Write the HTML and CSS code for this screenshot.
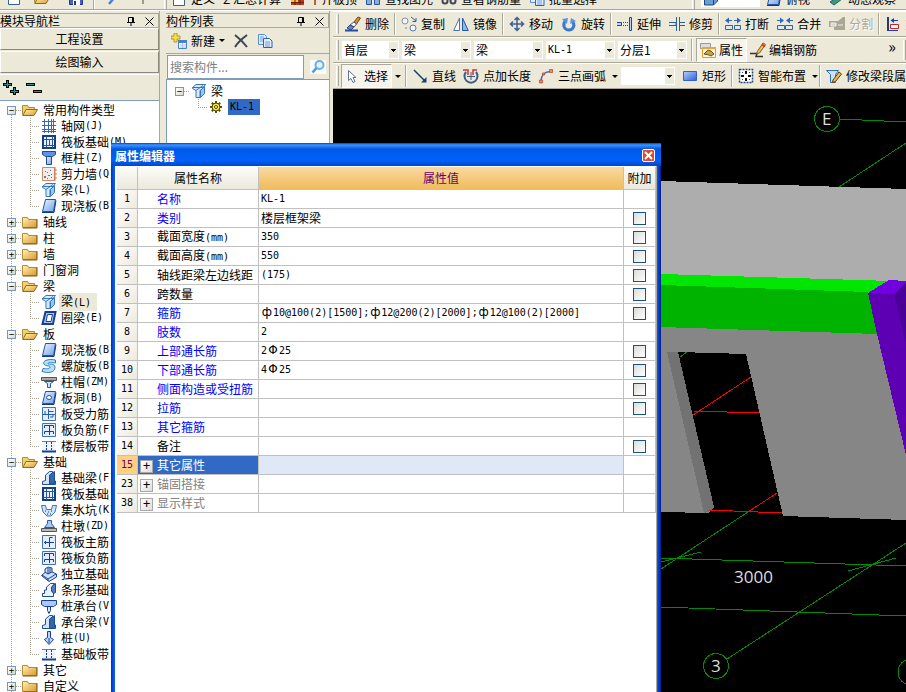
FILE: index.html
```html
<!DOCTYPE html>
<html lang="zh-CN">
<head>
<meta charset="utf-8">
<title>属性编辑器</title>
<link rel="stylesheet" href="styles.css">
</head>
<body>
<svg class="defs" aria-hidden="true">
  <defs>
    <linearGradient id="gBlue" x1="0" y1="0" x2="1" y2="1"><stop offset="0" stop-color="#eef5ff"/><stop offset="1" stop-color="#6fa0e4"/></linearGradient>
    <linearGradient id="gFold" x1="0" y1="0" x2="1" y2="1"><stop offset="0" stop-color="#fff2b4"/><stop offset="1" stop-color="#dc9a2c"/></linearGradient>
    <linearGradient id="gRect" x1="0" y1="0" x2="1" y2="1"><stop offset="0" stop-color="#b8d0ff"/><stop offset="1" stop-color="#2b5bd8"/></linearGradient>
  </defs>
  <symbol id="folder" viewBox="0 0 16 16"><path d="M.5 3.500h5l1 2h8v8H.5z" fill="url(#gFold)" stroke="#b58a30"/><path d="M15 5v9H1" fill="none" stroke="#7a5a18"/></symbol>
  <symbol id="folder-open" viewBox="0 0 16 16"><path d="M.5 12.500v-9h5l1 2h6v3" fill="#f3cf72" stroke="#b58a30"/><path d="M.8 13.500 4 7.500h11.500l-3.500 6z" fill="url(#gFold)" stroke="#8f6a1e"/></symbol>
  <symbol id="grid" viewBox="0 0 16 16"><path d="M1 3.500h14M1 7.500h14M1 11.500h14M3.500 1v14M7.500 1v14M12.500 1v14" fill="none" stroke="#3a66b8"/><path d="M1 13.500h14M10.500 1v14" fill="none" stroke="#3a66b8"/></symbol>
  <symbol id="raft" viewBox="0 0 16 16"><path d="M2 2h12v12H2z" fill="#e8f0ff" stroke="#153f7c" stroke-width="2"/><path d="M5.500 2v12M11.500 2v12M2 5.500h12M2 11.500h12M8.500 6v5" fill="none" stroke="#28569c"/></symbol>
  <symbol id="column" viewBox="0 0 16 16"><path d="M1.500 1.500h13v3l-3 2h-7l-3-2z" fill="#5f92df" stroke="#1c4a9c"/><path d="M5.500 6.500h5v8h-5z" fill="url(#gBlue)" stroke="#1c4a9c"/></symbol>
  <symbol id="wall" viewBox="0 0 16 16"><path d="M1.500 1.500h12v13h-12z" fill="#eee" stroke="#d08a6a"/><path d="M3 10h2v2H3zM6 6h1v1H6zM9 4h1v1H9zM7 9h2v1H7zM10 8h1v1h-1zM4 5h1v1H4zM6 12h1v1H6zM10 11h1v1h-1z" fill="#777"/><path d="M14 1v14M13 4h3M13 8h3M13 12h3" stroke="#d07a50"/></symbol>
  <symbol id="beam" viewBox="0 0 16 16"><path d="M1.500 4.500 5 1.500h9.500L12 4.500v1l-3 2v7H5v-7l-3.500-2z" fill="#d9eaff" stroke="#3477bd"/><path d="m9.500 7.500 4-4v7l-4 4z" fill="#9ac4f2" stroke="#3477bd"/><path d="M1.500 4.500H12M5 7.500l7-5" stroke="#3477bd" fill="none"/></symbol>
  <symbol id="slab" viewBox="0 0 16 16"><path d="M4.500 1.500h10l-2 12h-11z" fill="url(#gBlue)" stroke="#2353a5"/><path d="M1 14.500h12l2-12" fill="none" stroke="#123a85"/></symbol>
  <symbol id="ring" viewBox="0 0 16 16"><path d="M4.500 2h10l-2.500 12H1.500z" fill="#a9c7f3" stroke="#173f94" stroke-width="2"/><path d="M6.500 4.500h5l-1.500 7H5z" fill="#fff" stroke="#173f94"/></symbol>
  <symbol id="spiral" viewBox="0 0 16 16"><path d="M14.500 2C7 .500 1 3 3 6s6 1 6 3-4 2-7 1.500L1 13.500c6 2 13 1 13-4S7 7 7 5.500s4-1 7.500-.5z" fill="#b7e0f8" stroke="#2a7cc4"/></symbol>
  <symbol id="cap" viewBox="0 0 16 16"><path d="M.5 3.500h15v3H.5z" fill="#aaa" stroke="#555"/><path d="M3.500 7.500h9l-3 2v4h-3v-4z" fill="#cfe1fb" stroke="#245aa8"/></symbol>
  <symbol id="hole" viewBox="0 0 16 16"><path d="M4.500 1.500h10l-2 12h-11z" fill="url(#gBlue)" stroke="#2353a5"/><path d="M1 14.500h12l2-12" fill="none" stroke="#123a85"/><ellipse cx="8" cy="7.500" rx="2.500" ry="2" fill="#fff" stroke="#2353a5"/></symbol>
  <symbol id="rebar1" viewBox="0 0 16 16"><path d="M1.500 1.500h13v13h-13z" fill="#e3edfd" stroke="#3d70bd"/><path d="M2 8.500h12M4 8V5M7.500 3v10M7.500 5.500h5M12 8v3H9" fill="none" stroke="#285ba8"/></symbol>
  <symbol id="rebar2" viewBox="0 0 16 16"><path d="M1.500 1.500h13v13h-13z" fill="#e3edfd" stroke="#3d70bd"/><path d="M3.500 12V9.500h9V12M3.500 6V3.500h9V6M8.500 4v9" fill="none" stroke="#173f94"/></symbol>
  <symbol id="strip" viewBox="0 0 16 16"><path d="M1 3.500h14M1 13h14" stroke="#4c80cd"/><path d="M2 4h12v9H2z" fill="#edf4ff"/><path d="M5.500 4v9M10.500 4v9" stroke="#173f94" stroke-dasharray="2 1"/><path d="M1 13.500h14" stroke="#173f94" stroke-width="2"/></symbol>
  <symbol id="fbeam" viewBox="0 0 16 16"><path d="M1.500 14.500v-3l3-1V5l4-3.500h3V9l3 2v3.500z" fill="#d4e4fb" stroke="#1d4d97"/><path d="M8.500 14V5l5-3.500v12z" fill="#3466ad" stroke="#1d4d97"/></symbol>
  <symbol id="pit" viewBox="0 0 16 16"><path d="M.5 3.500h4l1 4h5l1-4h4L14 10l-4 4H6l-4-4z" fill="#cfe3fa" stroke="#3c74bd"/><path d="M4 9h1M7 10h1M10 9h1M6 12h1M9 12h1" stroke="#123a85"/></symbol>
  <symbol id="pier" viewBox="0 0 16 16"><path d="M6.500 2.500h4v3l3 4h-10l3-4z" fill="#a9c9f4" stroke="#245aa8"/><path d="M.5 10.500h15v3H.5z" fill="#bbb" stroke="#555"/></symbol>
  <symbol id="rebar3" viewBox="0 0 16 16"><path d="M1.500 1.500h13v13h-13z" fill="#e3edfd" stroke="#3d70bd"/><path d="M3 8.500h10M8.500 13V3.500h3M4.500 7v3" fill="none" stroke="#173f94"/></symbol>
  <symbol id="iso" viewBox="0 0 16 16"><path d="M.5 9.500 4 6.500V3l3-2 4 1v4l4.500 2v3L8 15.500z" fill="#d0e2fb" stroke="#173f94"/><path d="m1 9 6 4 8-5M7 13v2M4 6l3 2 4-2M7 2v6M9 2v5" fill="none" stroke="#173f94"/></symbol>
  <symbol id="stripf" viewBox="0 0 16 16"><path d="M1.500 14.500v-3h2V8h2V5l4-3.500h4l-3 4V9l2 2v3.500z" fill="#eaf2ff" stroke="#1d4d97"/><path d="m10.500 5 4-3.500v9l-2 1-2-3z" fill="#547fbe" stroke="#1d4d97"/></symbol>
  <symbol id="pilecap" viewBox="0 0 16 16"><path d="M.5 2.500h15v4l-3 2h-9l-3-2z" fill="#a9c9f4" stroke="#173f94"/><path d="M6.500 8.500h3v4l-1.500 3-1.500-3z" fill="#d8e8ff" stroke="#173f94"/></symbol>
  <symbol id="pile" viewBox="0 0 16 16"><path d="M6.500 1.500h3v6l3 2-4.500 5-4.500-5 3-2z" fill="#b9d4f8" stroke="#173f94"/><path d="M8 8v5" stroke="#173f94"/></symbol>
  <symbol id="gear" viewBox="0 0 16 16"><path d="M8 2v12M2 8h12M3.800 3.800l8.400 8.400M12.200 3.800l-8.400 8.400" stroke="#5c5200" stroke-width="2"/><circle cx="8" cy="8" r="4" fill="#f8ec20" stroke="#4a4200"/><circle cx="8" cy="8" r="1.500" fill="#fff" stroke="#4a4200"/></symbol>
  <symbol id="new" viewBox="0 0 16 16"><path d="M3 0h3v3h3v3H6v3H3V6H0V3h3z" fill="#f5dc4a" stroke="#a8861c" stroke-width=".8"/><path d="M7.500 7.500h8v8h-8z" fill="#fff" stroke="#4a7fd0"/><path d="M7 7h9v3H7z" fill="#4a7fd0"/><path d="M9 12h6M9 14h6M11.500 10v5" stroke="#a8c4ee"/></symbol>
  <symbol id="cross" viewBox="0 0 16 16"><path d="M2 2c4 3 8 7 12 12M14 2C10 5 5 9 2 14" fill="none" stroke="#3a4452" stroke-width="2"/></symbol>
  <symbol id="docs" viewBox="0 0 16 16"><path d="M1.500 1.500h6l2 2v8h-8z" fill="#e2eefc" stroke="#5a8ed0"/><path d="M6.500 5.500h6l2.500 2.500v6.500H6.500z" fill="#e2eefc" stroke="#2a62b8"/><path d="M3 4h4M3 6h3M3 8h3M8 9h5M8 11h5M8 13h5" stroke="#6f9edb"/></symbol>
  <symbol id="lens" viewBox="0 0 16 16"><path d="M0 1h16v14H0z" fill="#fafdff"/><circle cx="9.500" cy="6" r="4" fill="#e2f3ff" stroke="#69b0ea" stroke-width="2"/><path d="m6.500 9-4 4.500" stroke="#4d96dc" stroke-width="2.500"/></symbol>
  <symbol id="pin" viewBox="0 0 16 16"><path d="M5.500 9V4.500h5V9M4 9.500h8M8 10v3M9.500 4v5" fill="none" stroke="#000"/></symbol>
  <symbol id="close" viewBox="0 0 16 16"><path d="m4.500 4.500 8 8M12.500 4.500l-8 8" stroke="#000"/></symbol>
  <symbol id="erase" viewBox="0 0 16 16"><path d="m9 6 4-5 2.500 1-4 6z" fill="#d88a3c" stroke="#7a4410"/><path d="m5 9 4-3 2.500 2L9 11z" fill="#fff" stroke="#556"/><path d="m2 12 3-3 4 2-3 3z" fill="#5a86d8" stroke="#28488c"/><path d="M0 14.500h13" stroke="#2a4a9a" stroke-width="2"/></symbol>
  <symbol id="copy" viewBox="0 0 16 16"><circle cx="4" cy="5" r="3" fill="#f4f6fa" stroke="#8292aa"/><circle cx="12" cy="12" r="3" fill="#f4f6fa" stroke="#5478b0"/><circle cx="5" cy="12" r="1" fill="#98a6b8"/><path d="m10 1 5 4M15 2v3.500h-3.500" fill="none" stroke="#35609e"/></symbol>
  <symbol id="mirror" viewBox="0 0 16 16"><path d="M6.500 2v12.500H.7z" fill="#fff" stroke="#4676b8"/><path d="M9.500 2v12.500h5.800z" fill="#8db7ea" stroke="#2458a8"/></symbol>
  <symbol id="move" viewBox="0 0 16 16"><path d="M8 2v12M2 8h12M5.500 4 8 1.500 10.500 4M5.500 12 8 14.500l2.500-2.500M4 5.500 1.500 8 4 10.500M12 5.500 14.500 8 12 10.500" fill="none" stroke="#3c5f92" stroke-width="1.500"/></symbol>
  <symbol id="rotate" viewBox="0 0 16 16"><path d="M4 5c-3 5 0 9 4 9s7-5 3-9" fill="none" stroke="#3c78cc" stroke-width="3"/><path d="m1 3 6-1-1 6zM9 8l1-6 5 3z" fill="#5c94dc"/></symbol>
  <symbol id="extend" viewBox="0 0 16 16"><path d="M0 6.500h4.500v3H0" fill="#bcd6f2" stroke="#1e4c8c"/><path d="M6 6.500h5M6 9.500h5" stroke="#1e4c8c" stroke-dasharray="1 1"/><path d="M12.500 1.500h2v13h-2z" fill="#b9d4f4" stroke="#1e4c8c"/></symbol>
  <symbol id="trim" viewBox="0 0 16 16"><path d="M0 6.500h7v3H0M11 6.500h5M11 9.500h5" fill="none" stroke="#2d619e"/><path d="M7.500 1v14M10.500 1v14" stroke="#2d619e"/></symbol>
  <symbol id="break" viewBox="0 0 16 16"><path d="M.5 9.500h7v4h-7zM9.500 9.500h6v4h-6z" fill="#dce9f8" stroke="#3c6090"/><path d="M1 4.500h6M9 4.500h6" stroke="#2f66c0"/><path d="M4 1.500v6l-4-3zM12 1.500v6l4-3z" fill="#2f66c0"/></symbol>
  <symbol id="merge" viewBox="0 0 16 16"><path d="M.5 9.500h7v4h-7zM8.500 9.500h7v4h-7z" fill="#dce9f8" stroke="#3c6090"/><path d="M0 4.500h6M10 4.500h6" stroke="#2f66c0"/><path d="M3 1.500v6l4-3zM13 1.500v6l-4-3z" fill="#2f66c0"/></symbol>
  <symbol id="split" viewBox="0 0 16 16"><path d="M0 5h9l5-4h2v13H5v-3H0z" fill="#aaa797"/><path d="M2 7h5v3H2zM9 9h5" fill="#d8d5c6" stroke="#eee"/></symbol>
  <symbol id="align" viewBox="0 0 16 16"><path d="M2 1h2v14H2z" fill="#20406c"/><path d="M6 4.500h7" stroke="#1640c0"/><path d="M9 2v5L5.500 4.500z" fill="#1640c0"/><path d="M5.500 8.500h8v4h-8z" fill="#fff" stroke="#d02020"/><path d="M4 14.500h9" stroke="#1640c0"/></symbol>
  <symbol id="props" viewBox="0 0 16 16"><path d="M.5 1.500h10v5H.5z" fill="#ddd" stroke="#999"/><path d="M2.500 5.500h13v10h-13z" fill="#fff6da" stroke="#e89a30"/><path d="M2 5h14v2H2z" fill="#f0a23c"/><path d="m4 12 4-4 3 1 3 3-3 2-2-1z" fill="#c8a440" stroke="#6c5414"/></symbol>
  <symbol id="pencil" viewBox="0 0 16 16"><path d="M0 11.500h7l-1 3h7" fill="none" stroke="#333" stroke-width="1.500"/><path d="m7 10 6-9 2.500 1.500-6 8.500-3 1z" fill="#eac25c" stroke="#8a5a20"/><path d="m12 2.500 3 2" stroke="#c83c28" stroke-width="2"/></symbol>
  <symbol id="cursor" viewBox="0 0 16 16"><path d="M4.500 2.500v10l2.500-2 2 4 2-1-2-4h3z" fill="#fff" stroke="#5d769c"/></symbol>
  <symbol id="line" viewBox="0 0 16 16"><path d="m2 2 11 11" stroke="#173f70" stroke-width="1.500"/><path d="M14.500 9v5.500H9z" fill="#173f70"/></symbol>
  <symbol id="ptlen" viewBox="0 0 16 16"><path d="M3 4a6.500 6.500 0 1 0 10 0" fill="none" stroke="#3a5c88" stroke-width="2"/><path d="M8 4v8M4 8.500h8" stroke="#3a5c88"/><path d="M0 2h5v5M10 7V2h4" fill="none" stroke="#c23a34" stroke-width="1.500"/></symbol>
  <symbol id="arc" viewBox="0 0 16 16"><path d="M3 13C3 8 6 4 12 3.500" fill="none" stroke="#3c6cb4" stroke-width="1.500"/><path d="M1.500 12h3v3h-3zM4.500 5h2v2h-2zM11.500 1.500h3v3h-3z" fill="#f08a70" stroke="#b83c28" stroke-width=".7"/></symbol>
  <symbol id="rect" viewBox="0 0 16 16"><path d="M1.500 3.500h13v9h-13z" fill="url(#gRect)" stroke="#3060c8"/></symbol>
  <symbol id="smart" viewBox="0 0 16 16"><path d="M1.500 1.500h13v13h-13z" fill="#fff" stroke="#234870" stroke-dasharray="2 1" stroke-width="1.500"/><path d="M8 3v3M8 10v3M3 8h3M10 8h3" stroke="#111" stroke-width="2"/><path d="M4 4h1v1H4zM11 4h1v1h-1zM4 11h1v1H4zM11 11h1v1h-1z" fill="#234870"/></symbol>
  <symbol id="modify" viewBox="0 0 16 16"><path d="M.5 2.500h12l-3 4v8h-5v-8z" fill="#cfe2fb" stroke="#2c6cc4"/><path d="m7 12 6-8 2.500 2-6 7.500-3 1z" fill="#e8bc50" stroke="#5a3a10"/></symbol>
  <symbol id="page" viewBox="0 0 16 16"><path d="M2.500 1.500h11v13h-11z" fill="#fff" stroke="#3c6090"/></symbol>
  <symbol id="save" viewBox="0 0 16 16"><path d="M1.500 1.500h13v13h-13z" fill="#4a62b8" stroke="#20388c"/><path d="M5 10h7v5H5z" fill="#fff"/><path d="M6 11h2v4H6z" fill="#20388c"/></symbol>
  <symbol id="stroke-blue" viewBox="0 0 16 16"><path d="m5 14 5-6" stroke="#4682dc" stroke-width="2.500"/></symbol>
  <symbol id="stroke-grey" viewBox="0 0 16 16"><path d="M6 9h5v5" fill="none" stroke="#a09c8c" stroke-width="2"/></symbol>
  <symbol id="brick" viewBox="0 0 16 16"><path d="M2 4h13v10H2z" fill="#b83c20"/><path d="M2 8h7v3H2z" fill="#f0c830"/><path d="M2 11.500h13M6 8v6M11 8v6" stroke="#6c1c0c"/></symbol>
  <symbol id="find" viewBox="0 0 16 16"><path d="M1.500 5.500h5v8h-5zM9.500 5.500h5v8h-5z" fill="#88aee0" stroke="#28549c"/></symbol>
  <symbol id="box3d" viewBox="0 0 16 16"><path d="m1.500 6 4-4h9v8l-4 4h-9z" fill="#6a9ed4" stroke="#1c4878"/><path d="M10.500 14V6l4-4" fill="none" stroke="#1c4878"/></symbol>
  <symbol id="glasses" viewBox="0 0 16 16"><circle cx="4" cy="10" r="2.500" fill="none" stroke="#445" stroke-width="2"/><circle cx="12" cy="10" r="2.500" fill="none" stroke="#445" stroke-width="2"/></symbol>
  <symbol id="orbit" viewBox="0 0 16 16"><path d="m2 11 9-6 3 3-8 6z" fill="#3c9c6c" stroke="#1c5c84"/></symbol>
</svg>

<div class="app">
  <header class="topbar">
    <div class="topgroup files">
      <svg class="ic"><use href="#page"/></svg><svg class="ic"><use href="#folder-open"/></svg><svg class="ic wide"><use href="#save"/></svg><span class="sep"></span><svg class="ic"><use href="#stroke-blue"/></svg><svg class="ic"><use href="#stroke-grey"/></svg>
    </div>
    <div class="topgroup tasks">
      <span class="grip"></span>
      <a href="#" class="tool"><svg class="ic"><use href="#page"/></svg>定义</a>
      <a href="#" class="tool">Σ 汇总计算</a>
      <a href="#" class="tool"><svg class="ic"><use href="#brick"/></svg>平齐板顶</a>
      <a href="#" class="tool"><svg class="ic"><use href="#find"/></svg>查找图元</a>
      <a href="#" class="tool"><svg class="ic"><use href="#glasses"/></svg>查看钢筋量</a>
      <a href="#" class="tool"><svg class="ic"><use href="#docs"/></svg>批量选择</a>
    </div>
    <div class="topgroup views">
      <span class="grip"></span>
      <span class="viewbox"><svg class="ic"><use href="#box3d"/></svg></span>
      <a href="#" class="tool"><svg class="ic"><use href="#slab"/></svg>俯视</a>
      <a href="#" class="tool orbit"><svg class="ic"><use href="#orbit"/></svg>动态观察</a>
    </div>
  </header>

  <div class="body">
    <aside class="nav">
      <div class="caption"><h2>模块导航栏</h2><button aria-label="固定"><svg class="ic"><use href="#pin"/></svg></button><button aria-label="关闭"><svg class="ic"><use href="#close"/></svg></button></div>
      <button class="section">工程设置</button>
      <button class="section">绘图输入</button>
      <div class="navtools">
        <button aria-label="全部展开"><svg width="18" height="18" viewBox="0 0 18 18"><path d="M5.500 1v8M1 5.500h9M12.500 8v8M8 12.500h9" stroke="#000" stroke-width="3"/><path d="M5.500 2v6M2 5.500h7M12.500 9v6M9 12.500h7" stroke="#159a8e"/></svg></button>
        <button aria-label="全部折叠"><svg width="18" height="18" viewBox="0 0 18 18"><path d="M1 5.500h9M8 12.500h9" stroke="#000" stroke-width="3"/><path d="M2 5.500h7M9 12.500h7" stroke="#159a8e"/></svg></button>
      </div>
      <ul class="tree">
        <li><div class="node"><button class="tw">−</button><svg class="ic"><use href="#folder-open"/></svg>常用构件类型</div>
          <ul>
            <li><svg class="ic"><use href="#grid"/></svg>轴网<span class="n">(J)</span></li>
            <li><svg class="ic"><use href="#raft"/></svg>筏板基础<span class="n">(M)</span></li>
            <li><svg class="ic"><use href="#column"/></svg>框柱<span class="n">(Z)</span></li>
            <li><svg class="ic"><use href="#wall"/></svg>剪力墙<span class="n">(Q)</span></li>
            <li><svg class="ic"><use href="#beam"/></svg>梁<span class="n">(L)</span></li>
            <li><svg class="ic"><use href="#slab"/></svg>现浇板<span class="n">(B)</span></li>
          </ul></li>
        <li><div class="node"><button class="tw">+</button><svg class="ic"><use href="#folder"/></svg>轴线</div></li>
        <li><div class="node"><button class="tw">+</button><svg class="ic"><use href="#folder"/></svg>柱</div></li>
        <li><div class="node"><button class="tw">+</button><svg class="ic"><use href="#folder"/></svg>墙</div></li>
        <li><div class="node"><button class="tw">+</button><svg class="ic"><use href="#folder"/></svg>门窗洞</div></li>
        <li><div class="node"><button class="tw">−</button><svg class="ic"><use href="#folder-open"/></svg>梁</div>
          <ul>
            <li><svg class="ic"><use href="#beam"/></svg><span class="current">梁<span class="n">(L)</span></span></li>
            <li><svg class="ic"><use href="#ring"/></svg>圈梁<span class="n">(E)</span></li>
          </ul></li>
        <li><div class="node"><button class="tw">−</button><svg class="ic"><use href="#folder-open"/></svg>板</div>
          <ul>
            <li><svg class="ic"><use href="#slab"/></svg>现浇板<span class="n">(B)</span></li>
            <li><svg class="ic"><use href="#spiral"/></svg>螺旋板<span class="n">(B)</span></li>
            <li><svg class="ic"><use href="#cap"/></svg>柱帽<span class="n">(ZM)</span></li>
            <li><svg class="ic"><use href="#hole"/></svg>板洞<span class="n">(B)</span></li>
            <li><svg class="ic"><use href="#rebar1"/></svg>板受力筋</li>
            <li><svg class="ic"><use href="#rebar2"/></svg>板负筋<span class="n">(F)</span></li>
            <li><svg class="ic"><use href="#strip"/></svg>楼层板带</li>
          </ul></li>
        <li><div class="node"><button class="tw">−</button><svg class="ic"><use href="#folder-open"/></svg>基础</div>
          <ul>
            <li><svg class="ic"><use href="#fbeam"/></svg>基础梁<span class="n">(F)</span></li>
            <li><svg class="ic"><use href="#raft"/></svg>筏板基础</li>
            <li><svg class="ic"><use href="#pit"/></svg>集水坑<span class="n">(K)</span></li>
            <li><svg class="ic"><use href="#pier"/></svg>柱墩<span class="n">(ZD)</span></li>
            <li><svg class="ic"><use href="#rebar3"/></svg>筏板主筋</li>
            <li><svg class="ic"><use href="#rebar2"/></svg>筏板负筋</li>
            <li><svg class="ic"><use href="#iso"/></svg>独立基础</li>
            <li><svg class="ic"><use href="#stripf"/></svg>条形基础</li>
            <li><svg class="ic"><use href="#pilecap"/></svg>桩承台<span class="n">(V)</span></li>
            <li><svg class="ic"><use href="#fbeam"/></svg>承台梁<span class="n">(V)</span></li>
            <li><svg class="ic"><use href="#pile"/></svg>桩<span class="n">(U)</span></li>
            <li><svg class="ic"><use href="#strip"/></svg>基础板带</li>
          </ul></li>
        <li><div class="node"><button class="tw">+</button><svg class="ic"><use href="#folder"/></svg>其它</div></li>
        <li><div class="node"><button class="tw">+</button><svg class="ic"><use href="#folder"/></svg>自定义</div></li>
      </ul>
    </aside>

    <section class="list">
      <div class="caption"><h2>构件列表</h2><button aria-label="固定"><svg class="ic"><use href="#pin"/></svg></button><button aria-label="关闭"><svg class="ic"><use href="#close"/></svg></button></div>
      <div class="listtools">
        <button class="tool"><svg class="ic"><use href="#new"/></svg>新建<span class="arrow"></span></button>
        <button class="tool" aria-label="删除构件"><svg class="ic"><use href="#cross"/></svg></button>
        <button class="tool" aria-label="复制构件"><svg class="ic"><use href="#docs"/></svg></button>
      </div>
      <div class="search"><input type="text" placeholder="搜索构件..." aria-label="搜索构件"><button aria-label="搜索"><svg class="ic"><use href="#lens"/></svg></button></div>
      <ul class="tree members">
        <li><div class="node"><button class="tw">−</button><svg class="ic"><use href="#beam"/></svg>梁</div>
          <ul><li><svg class="ic"><use href="#gear"/></svg><span class="chosen n">KL-1</span></li></ul></li>
      </ul>
    </section>

    <main class="work">
      <div class="bar">
        <span class="grip"></span>
        <button class="tool"><svg class="ic"><use href="#erase"/></svg>删除</button><span class="sep"></span>
        <button class="tool"><svg class="ic"><use href="#copy"/></svg>复制</button>
        <button class="tool"><svg class="ic"><use href="#mirror"/></svg>镜像</button><span class="sep"></span>
        <button class="tool"><svg class="ic"><use href="#move"/></svg>移动</button>
        <button class="tool"><svg class="ic"><use href="#rotate"/></svg>旋转</button><span class="sep"></span>
        <button class="tool"><svg class="ic"><use href="#extend"/></svg>延伸</button>
        <button class="tool"><svg class="ic"><use href="#trim"/></svg>修剪</button><span class="sep"></span>
        <button class="tool"><svg class="ic"><use href="#break"/></svg>打断</button>
        <button class="tool"><svg class="ic"><use href="#merge"/></svg>合并</button>
        <button class="tool" disabled><svg class="ic"><use href="#split"/></svg>分割</button><span class="sep"></span>
        <button class="tool"><svg class="ic"><use href="#align"/></svg>对齐</button>
      </div>
      <div class="bar picks">
        <span class="grip"></span>
        <select class="short" aria-label="楼层"><option>首层</option></select>
        <select aria-label="构件类别"><option>梁</option></select>
        <select aria-label="构件类型"><option>梁</option></select>
        <select class="latin" aria-label="构件名称"><option>KL-1</option></select>
        <select aria-label="分层"><option>分层1</option></select>
        <span class="sep"></span>
        <button class="tool pressed"><svg class="ic"><use href="#props"/></svg>属性</button>
        <button class="tool"><svg class="ic"><use href="#pencil"/></svg>编辑钢筋</button>
        <button class="more" aria-label="更多">»</button>
        <span class="grip"></span>
      </div>
      <div class="bar draw">
        <span class="grip"></span>
        <button class="tool pressed"><svg class="ic"><use href="#cursor"/></svg>选择</button><span class="arrow"></span><span class="sep"></span>
        <button class="tool"><svg class="ic"><use href="#line"/></svg>直线</button>
        <button class="tool"><svg class="ic"><use href="#ptlen"/></svg>点加长度</button>
        <button class="tool"><svg class="ic"><use href="#arc"/></svg>三点画弧<span class="arrow"></span></button>
        <select class="short" aria-label="绘制方式"><option></option></select>
        <button class="tool"><svg class="ic"><use href="#rect"/></svg>矩形</button><span class="sep"></span>
        <button class="tool"><svg class="ic"><use href="#smart"/></svg>智能布置<span class="arrow"></span></button><span class="sep"></span>
        <button class="tool"><svg class="ic"><use href="#modify"/></svg>修改梁段属性</button>
      </div>
      <svg class="scene" role="img" aria-label="三维视图">
        <g transform="translate(-333 -89)" shape-rendering="crispEdges">
          <path d="M901 280l5-3v5h-5z" fill="#777"/>
          <path d="M600 179 661 181 906 189v95L661 276l-61-2z" fill="#adadad"/>
          <path d="M600 325 661 327 877 334 906 420v100l-123-4-37-162-68-2 36 155-5 6-48-1-61-2z" fill="#868686"/>
          <path d="M667 352h11l36 155-3 4-7 2z" fill="#727272"/>
          <path d="M600 272 661 274 893 281 868 293 661 286l-61-2z" fill="#00e600"/>
          <path d="M600 283 661 285 868 292 877 334 661 327l-61-2z" fill="#00b300"/>
          <path d="m868 293 26 1 12 50v111l-29-121z" fill="#5d00b4"/>
          <path d="m868 293 21-13 17 1v3l-12 10z" fill="#7100e0"/>
          <path d="m894 294 12-11v61z" fill="#4b0099"/>
          <path d="m693 415 58-38M694 411l65 2M709 510l73 3M748 512l29-19" stroke="#f00"/>
          <g fill="none" stroke="#008c00">
            <path d="m680 357 7-5M748 512l-87 57M661 558l245 8M661 562l40-10M848 571l48-13M906 543 727 659M661 607l245 9M840 119l66 3M839 187l67-44"/>
            <circle cx="716" cy="666" r="12.500"/><circle cx="911" cy="672" r="13"/><circle cx="827" cy="119" r="12.500"/>
          </g>
          <g class="marks"><text x="734" y="583">3000</text><text x="711" y="672">3</text><text x="822" y="125">E</text></g>
        </g>
      </svg>
    </main>
  </div>

  <section class="dialog" role="dialog" aria-labelledby="dlg">
    <div class="titlebar"><h1 id="dlg">属性编辑器</h1><button aria-label="关闭"><svg width="11" height="11" viewBox="0 0 11 11"><path d="m2 2 7 7M9 2 2 9" stroke="#fff" stroke-width="2"/></svg></button></div>
    <div class="client">
      <table>
        <colgroup><col class="c-num"><col class="c-name"><col><col class="c-add"></colgroup>
        <thead><tr><th></th><th>属性名称</th><th class="hot">属性值</th><th>附加</th></tr></thead>
        <tbody>
          <tr><th>1</th><td class="key">名称</td><td><span class="n">KL-1</span></td><td></td></tr>
          <tr><th>2</th><td class="key">类别</td><td>楼层框架梁</td><td><input type="checkbox" aria-label="类别"></td></tr>
          <tr><th>3</th><td>截面宽度<span class="n">(mm)</span></td><td><span class="n">350</span></td><td><input type="checkbox" aria-label="截面宽度"></td></tr>
          <tr><th>4</th><td>截面高度<span class="n">(mm)</span></td><td><span class="n">550</span></td><td><input type="checkbox" aria-label="截面高度"></td></tr>
          <tr><th>5</th><td>轴线距梁左边线距</td><td><span class="n">(175)</span></td><td><input type="checkbox" aria-label="轴线距梁左边线距"></td></tr>
          <tr><th>6</th><td>跨数量</td><td></td><td><input type="checkbox" aria-label="跨数量"></td></tr>
          <tr><th>7</th><td class="key">箍筋</td><td><span class="n"><b>ф</b>10@100(2)[1500];<b>ф</b>12@200(2)[2000];<b>ф</b>12@100(2)[2000]</span></td><td><input type="checkbox" aria-label="箍筋"></td></tr>
          <tr><th>8</th><td class="key">肢数</td><td><span class="n">2</span></td><td></td></tr>
          <tr><th>9</th><td class="key">上部通长筋</td><td><span class="n">2<b>Φ</b>25</span></td><td><input type="checkbox" aria-label="上部通长筋"></td></tr>
          <tr><th>10</th><td class="key">下部通长筋</td><td><span class="n">4<b>Φ</b>25</span></td><td><input type="checkbox" aria-label="下部通长筋"></td></tr>
          <tr><th>11</th><td class="key">侧面构造或受扭筋</td><td></td><td><input type="checkbox" aria-label="侧面构造或受扭筋"></td></tr>
          <tr><th>12</th><td class="key">拉筋</td><td></td><td><input type="checkbox" aria-label="拉筋"></td></tr>
          <tr><th>13</th><td class="key">其它箍筋</td><td></td><td></td></tr>
          <tr><th>14</th><td>备注</td><td></td><td><input type="checkbox" aria-label="备注"></td></tr>
          <tr class="active"><th>15</th><td class="fold"><button>+</button>其它属性</td><td></td><td></td></tr>
          <tr><th>23</th><td class="fold dim"><button>+</button>锚固搭接</td><td></td><td></td></tr>
          <tr><th>38</th><td class="fold dim"><button>+</button>显示样式</td><td></td><td></td></tr>
        </tbody>
      </table>
    </div>
  </section>
</div>
</body>
</html>
```
FILE: styles.css
```css
* { box-sizing: border-box; }
body { margin: 0; font: 12px/16px "Noto Sans CJK SC", sans-serif; color: #000; background: #ece9d8; }
button, input, select { font: inherit; color: inherit; }
button { padding: 0; border: 0; background: none; }
h1, h2, ul { margin: 0; padding: 0; font-size: 12px; }
h2 { font-weight: 400; }
ul { list-style: none; }
.defs { position: absolute; width: 0; height: 0; }
.ic { width: 16px; height: 16px; flex: none; }
.n { font-family: "DejaVu Sans Mono", "Noto Sans CJK SC", monospace; font-size: 10px; }
.app { position: relative; height: 100vh; display: flex; flex-direction: column; overflow: hidden; }

/* Shared toolbar parts */
.tool { display: flex; align-items: center; gap: 4px; flex: none; white-space: nowrap; color: #000; text-decoration: none; }
.tool:disabled { color: #aca899; text-shadow: 1px 1px #fff; }
.grip { width: 3px; height: 20px; flex: none; border-left: 1px solid #fff; border-right: 1px solid #aca899; }
.sep { width: 2px; height: 22px; flex: none; margin: 0 -3px; border-left: 1px solid #aca899; border-right: 1px solid #fff; }
.arrow { flex: none; border: 3px solid transparent; border-top-color: #000; border-bottom: 0; }
.pressed { height: 24px; padding: 0 4px; border: 1px solid #aca899; border-right-color: #fff; border-bottom-color: #fff; background: #f6f4ec; }

.topbar { display: flex; align-items: flex-end; height: 11px; flex: none; overflow: hidden; border-bottom: 1px solid #fff; box-shadow: inset 0 -1px #aca899; }
.topgroup { display: flex; align-items: center; padding-bottom: 1px; flex: none; }
.files { width: 164px; padding-left: 6px; gap: 12px; }
.files .wide { margin-left: 6px; }
.tasks { width: 528px; gap: 8px; }
.tasks .grip { margin-right: -4px; }
.views { gap: 6px; }
.views .orbit { margin-left: 12px; }
.viewbox { display: flex; width: 59px; padding-left: 2px; background: #fff; }

.body { flex: 1; min-height: 0; display: flex; }
.nav { width: 160px; flex: none; display: flex; flex-direction: column; border-right: 1px solid #aca899; }
.list { width: 164px; margin: 0 3px 0 6px; flex: none; display: flex; flex-direction: column; border-right: 1px solid #aca899; }
.caption { display: flex; align-items: center; height: 15px; margin: 2px 0 0; border: 1px solid #aca899; border-left: 0; flex: none; }
.caption h2 { flex: 1; }
.caption button { width: 18px; height: 16px; }
.section { height: 22px; margin-bottom: 1px; border: 1px solid; border-color: #fff #8c897a #8c897a #fff; flex: none; }
.navtools { display: flex; align-items: center; gap: 5px; height: 26px; padding-left: 2px; flex: none; border-top: 1px solid #fff; }
.navtools button { height: 18px; }

.tree { flex: 1; min-height: 0; padding-top: 1px; overflow: hidden; white-space: nowrap; border-top: 1px solid #7f9db9; background: repeating-linear-gradient(#a8a594 0 1px, #fff 1px 2px) 11px 8px / 1px 100% no-repeat #fff; }
.node, .tree ul li { display: flex; align-items: center; height: 16px; }
.node { padding-left: 7px; background: repeating-linear-gradient(90deg, #a8a594 0 1px, #fff 1px 2px) 16px 8px / 6px 1px no-repeat; }
.node .ic { margin: 0 5px 0 6px; }
.tw { display: grid; place-items: center; width: 9px; height: 9px; flex: none; border: 1px solid #7898b5; background: linear-gradient(135deg, #fff, #dcd8c8); font: 9px/7px "DejaVu Sans Mono", monospace; }
.tree ul { background: repeating-linear-gradient(#a8a594 0 1px, #fff 1px 2px) 30px 0 / 1px calc(100% - 8px) no-repeat; }
.tree ul li { padding-left: 41px; background: repeating-linear-gradient(90deg, #a8a594 0 1px, transparent 1px 2px) 30px 8px / 10px 1px no-repeat; }
.tree ul li > .ic { margin-right: 4px; }
.current { margin-left: -2px; padding: 0 6px 0 2px; background: #ece9d8; }

.listtools { display: flex; align-items: center; gap: 8px; height: 25px; padding-left: 5px; flex: none; }
.search { display: flex; align-items: center; height: 26px; flex: none; border-top: 1px solid #aca899; }
.search input { flex: 1; min-width: 0; height: 24px; margin: 0 6px 0 1px; padding: 0 2px; border: 1px solid #7f9db9; background: #fff; }
.search input::placeholder { color: #808080; opacity: 1; }
.search button { width: 16px; height: 16px; margin-right: 3px; }
.tree.members { padding: 3px 0 0 1px; border-left: 1px solid #7f9db9; background: #fff; }
.members .node .ic { margin: 0 4px 0 7px; }
.tree.members ul li { padding-left: 40px; }
.chosen { padding: 0 6px 0 2px; background: #316ac5; }

.work { flex: 1; min-width: 0; display: flex; flex-direction: column; }
.bar { display: flex; align-items: center; gap: 8px; height: 26px; padding-left: 3px; flex: none; overflow: hidden; border-bottom: 1px solid #aca899; border-top: 1px solid #fff; }
.bar > .grip { margin-right: -2px; }
.bar select { appearance: none; width: 69px; height: 18px; padding: 0 12px 0 2px; flex: none; border: 0; border-radius: 0; background: linear-gradient(#000, #000) right 3px top 8px / 5px 1px no-repeat, linear-gradient(#000, #000) right 4px top 9px / 3px 1px no-repeat, linear-gradient(#000, #000) right 5px top 10px / 1px 1px no-repeat, linear-gradient(#ece9d8, #ece9d8) right 1px center / 9px 16px no-repeat, #fff; }
.bar select.short { width: 57px; }
.bar select.latin { font-family: "DejaVu Sans Mono", monospace; font-size: 10px; }
.bar.picks { gap: 3px; }
.picks > .grip { margin-right: 0; }
.picks .sep { margin: 0 0 0 1px; }
.picks .tool { gap: 3px; }
.picks .pressed { padding: 0 3px; }
.more { margin: 0 4px 8px auto; font-size: 16px; line-height: 16px; }
.bar.draw { gap: 7px; }
.draw > .grip { margin-right: -5px; }
.draw .pressed { padding: 0 3px 0 2px; }
.draw > .arrow { margin: 0 -1px 0 -4px; }
.draw > .sep { margin: 0 -2px; }
.draw .tool .arrow { margin: 0 -4px 0 2px; }
.bar.draw select { width: 54px; }
.scene { flex: 1; min-height: 0; width: 100%; display: block; background: #000; }
.marks { fill: #ddd; font: 17px "Open Sans", sans-serif; }

/* Floating property editor */
.dialog { position: absolute; left: 111px; top: 143px; bottom: 0; width: 550px; display: flex; flex-direction: column; padding: 0 4px; background: linear-gradient(90deg, #0030c0, #0a5cf0 3px, #0a5cf0 calc(100% - 4px), #001a90); }
.titlebar { display: flex; align-items: center; justify-content: space-between; height: 23px; margin: 0 -4px; padding: 2px 6px 0 4px; flex: none; color: #fff; background: linear-gradient(#0b3fc0, #3c95ff 2px, #0058e6 6px, #0062f8 17px, #0046d0); }
.titlebar button { display: grid; place-items: center; width: 13px; height: 13px; border: 1px solid #fff; border-radius: 2px; background: #e2492a; }
.client { flex: 1; padding: 1px 0 0 2px; background: #fff; border-right: 1px solid #aaa89a; }
table { width: 100%; border-collapse: separate; border-spacing: 0; table-layout: fixed; }
.c-num { width: 21px; }
.c-name { width: 121px; }
.c-add { width: 32px; }
th, td { height: 19px; padding: 0; border: solid #c0c0c0; border-width: 0 1px 1px 0; line-height: 16px; white-space: nowrap; overflow: hidden; }
th { font-weight: 400; background: linear-gradient(135deg, #fff, #ece9dc); }
thead th { height: 23px; background: linear-gradient(#fcfcf8, #ebe8dc); }
thead .hot { color: #6a006a; background: linear-gradient(#fad9a0, #f0bc5c); }
tbody th { font: 10px/16px "DejaVu Sans Mono", monospace; }
td:nth-child(2) { padding-left: 19px; }
td:nth-child(3) { padding-left: 2px; }
td:nth-child(4) { text-align: center; }
td b { display: inline-block; width: 12px; font: 12px/12px "DejaVu Sans", sans-serif; text-align: center; }
td .n { display: block; }
td:nth-child(2) .n { display: inline; }
.key { color: #00f; }
.dim { color: #808080; }
td.fold { padding-left: 2px; }
.fold button { width: 13px; height: 13px; margin-right: 4px; border: 1px solid #a8a8a8; background: linear-gradient(135deg, #fff, #dedede); color: #000; font: 12px/11px "DejaVu Sans Mono", monospace; vertical-align: middle; }
.active th { color: #6a006a; background: #ffd084; }
.active td:nth-child(2) { color: #fff; background: #316ac5; }
.active td:nth-child(3) { background: #dfe8f6; }
input[type="checkbox"] { appearance: none; display: block; width: 13px; height: 13px; margin: 0 auto; border: 1px solid #1c5180; background: linear-gradient(135deg, #dcdcd7, #fff); }
```
